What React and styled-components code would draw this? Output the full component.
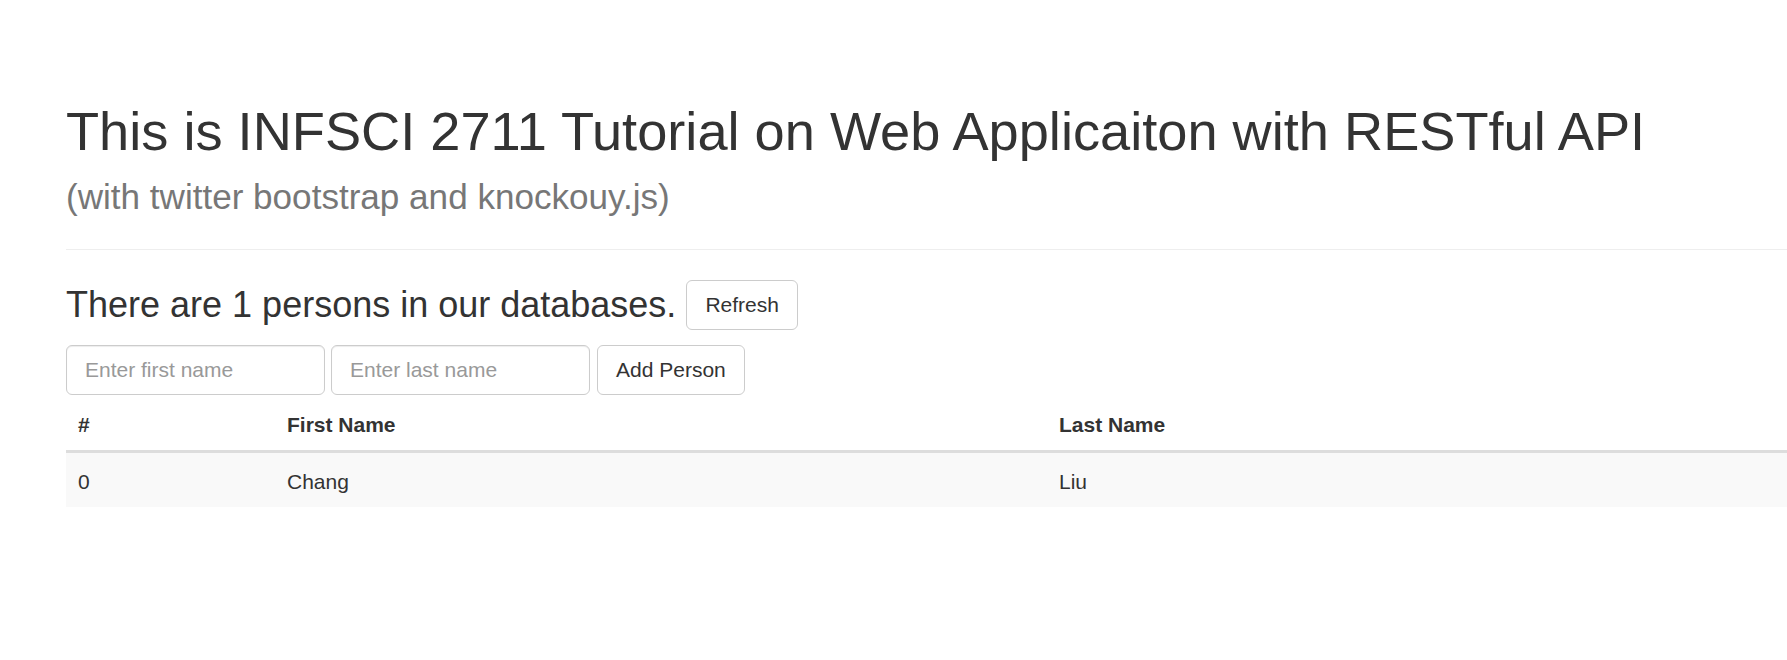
import React from "react";
import styled, { createGlobalStyle } from "styled-components";

const GlobalStyle = createGlobalStyle`
  html, body {
    margin: 0;
    padding: 0;
    background: #ffffff;
    overflow: hidden;
  }
  body {
    font-family: "Liberation Sans", Arial, Helvetica, sans-serif;
    font-size: 21px;
    line-height: 30px;
    color: #333333;
  }
  * { box-sizing: border-box; }
`;

const Container = styled.div`
  padding-left: 66px;
  width: 1787px;
`;

const PageHeader = styled.header`
  padding-top: 102px;
  padding-bottom: 22px;
  border-bottom: 1px solid #eeeeee;
`;

const Title = styled.h1`
  margin: 0;
  font-size: 54.2px;
  line-height: 59.4px;
  font-weight: 400;
  color: #333333;
  white-space: nowrap;
`;

const Subtitle = styled.small`
  font-size: 35.1px;
  color: #777777;
  font-weight: 400;
`;

const CountRow = styled.div`
  display: flex;
  align-items: center;
  gap: 10px;
  margin-top: 30px;
`;

const CountHeading = styled.h3`
  margin: 0;
  font-size: 36px;
  line-height: 39.6px;
  font-weight: 400;
  color: #333333;
  white-space: nowrap;
`;

const Button = styled.button`
  font-family: inherit;
  font-size: 21px;
  line-height: 30px;
  padding: 9px 18px;
  color: #333333;
  background: #ffffff;
  border: 1px solid #cccccc;
  border-radius: 6px;
  cursor: pointer;
  white-space: nowrap;
`;

const FormRow = styled.form`
  display: flex;
  align-items: center;
  gap: 6px;
  margin-top: 15px;
`;

const TextInput = styled.input`
  width: 259px;
  height: 50px;
  padding: 0 18px;
  font-family: inherit;
  font-size: 21px;
  color: #555555;
  background: #ffffff;
  border: 1px solid #cccccc;
  border-radius: 6px;
  box-shadow: inset 0 1px 1px rgba(0, 0, 0, 0.075);
  outline: none;
  &::placeholder {
    color: #999999;
  }
`;

const AddButton = styled(Button)`
  margin-left: 1px;
`;

const Table = styled.table`
  width: 1721px;
  margin-top: 1px;
  border-collapse: collapse;
  border-spacing: 0;
  table-layout: fixed;
`;

const HeadCell = styled.th`
  width: ${(p) => p.$w || "auto"};
  text-align: left;
  font-weight: 700;
  padding: 14px 12px 10px;
  line-height: 30px;
  border-bottom: 3px solid #dddddd;
`;

const BodyRow = styled.tr`
  background: ${(p) => (p.$striped ? "#f9f9f9" : "#ffffff")};
`;

const Cell = styled.td`
  padding: 14px 12px 10px;
  line-height: 30px;
`;

const persons = [{ id: 0, first: "Chang", last: "Liu" }];

export default function App() {
  return (
    <>
      <GlobalStyle />
      <Container>
        <PageHeader>
          <Title>
            This is INFSCI 2711 Tutorial on Web Applicaiton with RESTful API
            <br />
            <Subtitle>(with twitter bootstrap and knockouy.js)</Subtitle>
          </Title>
        </PageHeader>
        <CountRow>
          <CountHeading>There are {persons.length} persons in our databases.</CountHeading>
          <Button type="button">Refresh</Button>
        </CountRow>
        <FormRow onSubmit={(e) => e.preventDefault()}>
          <TextInput placeholder="Enter first name" />
          <TextInput placeholder="Enter last name" />
          <AddButton type="submit">Add Person</AddButton>
        </FormRow>
        <Table>
          <thead>
            <tr>
              <HeadCell $w="209px">#</HeadCell>
              <HeadCell $w="772px">First Name</HeadCell>
              <HeadCell>Last Name</HeadCell>
            </tr>
          </thead>
          <tbody>
            {persons.map((p, i) => (
              <BodyRow key={p.id} $striped={i % 2 === 0}>
                <Cell>{p.id}</Cell>
                <Cell>{p.first}</Cell>
                <Cell>{p.last}</Cell>
              </BodyRow>
            ))}
          </tbody>
        </Table>
      </Container>
    </>
  );
}
